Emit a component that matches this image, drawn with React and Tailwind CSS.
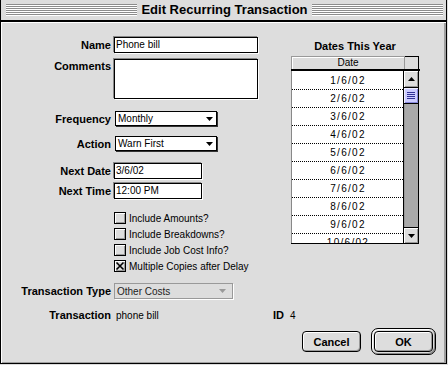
import React from "react";

const Arrow = ({ color = "#000" }) => (
  <svg width="7" height="4" viewBox="0 0 7 4" className="block">
    <path d="M0 0H7L3.5 4Z" fill={color} />
  </svg>
);

const UpArrow = () => (
  <svg width="7" height="4" viewBox="0 0 7 4" className="block">
    <path d="M3.5 0L7 4H0Z" fill="#000" />
  </svg>
);

const Checkbox = ({ checked }) => (
  <div className="w-[12px] h-[12px] border border-black bg-[#dddddd] shadow-[inset_1px_1px_0_#ffffff,inset_-1px_-1px_0_#999999] flex items-center justify-center">
    {checked && (
      <svg width="10" height="10" viewBox="0 0 10 10" className="block">
        <path d="M1.5 1.5L8.5 8.5M8.5 1.5L1.5 8.5" stroke="#000" strokeWidth="1.6" />
      </svg>
    )}
  </div>
);

const Label = ({ children, className = "" }) => (
  <div className={"w-[110px] text-right text-[11px] font-bold leading-[14px] text-black " + className}>
    {children}
  </div>
);

const Field = ({ value, w, h = "h-[16px]" }) => (
  <div
    className={
      "ml-[3px] bg-white border border-black shadow-[-1px_-1px_0_#888888,1px_1px_0_#ffffff] pl-[1px] text-[10px] leading-[14px] text-black flex items-center " +
      w +
      " " +
      h
    }
  >
    {value}
  </div>
);

const Popup = ({ value }) => (
  <div className="ml-[4px] w-[102px] h-[15px] bg-white border border-black shadow-[1px_1px_0_#333333] flex items-center justify-between pl-[2px] pr-[3px] text-[10px] leading-[13px] text-black">
    <span>{value}</span>
    <Arrow />
  </div>
);

const dates = ["1/6/02", "2/6/02", "3/6/02", "4/6/02", "5/6/02", "6/6/02", "7/6/02", "8/6/02", "9/6/02", "10/6/02"];

export default function App() {
  return (
    <div className="w-[448px] h-[365px] bg-[#dddddd] overflow-hidden font-['Liberation_Sans',Arial,sans-serif] text-black">
      <div className="w-[447px] h-[364px] border-l border-r border-b border-black flex flex-col">
        {/* Title bar */}
        <div className="h-[20px] shrink-0 flex items-center pl-[5px] pr-[3px] gap-[4px] border-b-2 border-black box-content">
          <div className="flex-1 h-[12px] bg-[image:repeating-linear-gradient(to_bottom,#8c8c8c_0px,#8c8c8c_1px,#ffffff_1px,#ffffff_2px)]" />
          <div className="text-[13px] font-bold leading-[16px] whitespace-nowrap">Edit Recurring Transaction</div>
          <div className="flex-1 h-[12px] bg-[image:repeating-linear-gradient(to_bottom,#8c8c8c_0px,#8c8c8c_1px,#ffffff_1px,#ffffff_2px)]" />
        </div>

        {/* Content */}
        <div className="h-[341px] shrink-0 flex flex-col shadow-[inset_1px_1px_0_#ffffff,inset_-2px_-1px_0_#a0a0a0]">
          <div className="flex items-start">
            {/* Left column */}
            <div className="w-[280px] pt-[15px] flex flex-col">
              <div className="flex items-center">
                <Label>Name</Label>
                <Field value="Phone bill" w="w-[144px]" />
              </div>
              <div className="flex items-start mt-[6px]">
                <Label>Comments</Label>
                <Field value="" w="w-[144px]" h="h-[40px]" />
              </div>
              <div className="flex items-center mt-[12px]">
                <Label>Frequency</Label>
                <Popup value="Monthly" />
              </div>
              <div className="flex items-center mt-[10px]">
                <Label>Action</Label>
                <Popup value="Warn First" />
              </div>
              <div className="flex items-center mt-[12px]">
                <Label>Next Date</Label>
                <Field value="3/6/02" w="w-[88px]" />
              </div>
              <div className="flex items-center mt-[4px]">
                <Label>Next Time</Label>
                <Field value="12:00 PM" w="w-[88px]" />
              </div>
              <div className="mt-[11px] pl-[113px] flex flex-col">
                {[
                  ["Include Amounts?", false],
                  ["Include Breakdowns?", false],
                  ["Include Job Cost Info?", false],
                  ["Multiple Copies after Delay", true],
                ].map(([t, c]) => (
                  <div key={t} className="h-[16px] flex items-center">
                    <Checkbox checked={c} />
                    <span className="ml-[3px] text-[10px] leading-[13px] whitespace-nowrap">{t}</span>
                  </div>
                ))}
              </div>
            </div>

            {/* Right column */}
            <div className="pl-[10px] pt-[17px] flex flex-col">
              <div className="w-[128px] text-center text-[11px] font-bold leading-[14px]">Dates This Year</div>
              <div className="mt-[3px] w-[128px] border-r border-b border-black">
                <div className="flex h-[13px]">
                  <div className="w-[114px] h-[13px] border-l border-t border-r border-[#999999] bg-[#dddddd] shadow-[inset_1px_1px_0_#ffffff] flex items-center justify-center text-[10px] leading-[12px]">
                    Date
                  </div>
                  <div className="flex-1 border-t border-black bg-[#dddddd]" />
                </div>
                <div className="h-[2px] w-[129px] bg-black" />
                <div className="flex h-[172px]">
                  <div className="w-[112px] border-l border-[#888888] bg-white overflow-hidden pt-[1px]">
                    {dates.map((d) => (
                      <div
                        key={d}
                        className="h-[18px] border-b border-dotted border-black flex items-center justify-center pl-[1px] text-[10px] leading-[12px] tracking-[1.3px]"
                      >
                        {d}
                      </div>
                    ))}
                  </div>
                  <div className="w-[15px] border-l border-black flex flex-col bg-[#aaaaaa]">
                    <div className="h-[17px] bg-[#dddddd] shadow-[inset_1px_1px_0_#ffffff,inset_-1px_-1px_0_#999999] border-b border-black flex items-center justify-center">
                      <UpArrow />
                    </div>
                    <div className="h-[16px] bg-[#ccccff] border-b border-black shadow-[inset_1px_1px_0_#eeeeff,inset_-1px_-1px_0_#8888dd] flex flex-col items-center justify-center gap-[1px]">
                      <div className="w-[8px] h-[1px] bg-[#333399]" />
                      <div className="w-[8px] h-[1px] bg-[#333399]" />
                      <div className="w-[8px] h-[1px] bg-[#333399]" />
                      <div className="w-[8px] h-[1px] bg-[#333399]" />
                    </div>
                    <div className="flex-1 shadow-[inset_1px_0_0_#999999]" />
                    <div className="h-[16px] bg-[#dddddd] border-t border-black shadow-[inset_1px_1px_0_#ffffff,inset_-1px_-1px_0_#999999] flex items-center justify-center">
                      <Arrow />
                    </div>
                  </div>
                </div>
              </div>
            </div>
          </div>

          {/* Transaction Type */}
          <div className="flex items-center mt-[9px]">
            <Label>Transaction Type</Label>
            <div className="ml-[3px] w-[119px] h-[16px] bg-[#dddddd] border border-[#999999] shadow-[1px_1px_0_#ffffff] flex items-center justify-between pl-[2px] pr-[6px] text-[10px] leading-[13px] text-[#222222]">
              <span>Other Costs</span>
              <Arrow color="#999999" />
            </div>
          </div>

          {/* Transaction */}
          <div className="flex items-center mt-[8px] h-[16px]">
            <Label>Transaction</Label>
            <span className="ml-[5px] w-[157px] text-[10px] leading-[13px]">phone bill</span>
            <span className="text-[11px] font-bold leading-[14px]">ID</span>
            <span className="ml-[6px] text-[10px] leading-[13px]">4</span>
          </div>

          {/* Buttons */}
          <div className="flex items-center justify-end gap-[10px] pr-[10px] mt-[5px]">
            <div className="w-[59px] h-[21px] border border-black rounded-[4px] bg-[#dddddd] shadow-[inset_1px_1px_0_#ffffff,inset_-1px_-1px_0_#999999] flex items-center justify-center text-[11px] font-bold leading-[14px]">
              Cancel
            </div>
            <div className="w-[65px] h-[27px] border border-black rounded-[7px] p-[2px] bg-[#dddddd] shadow-[inset_1px_1px_0_#ffffff,inset_-1px_-1px_0_#888888]">
              <div className="w-[59px] h-[21px] border border-black rounded-[4px] bg-[#dddddd] shadow-[inset_1px_1px_0_#ffffff,inset_-1px_-1px_0_#999999] flex items-center justify-center text-[11px] font-bold leading-[14px]">
                OK
              </div>
            </div>
          </div>
        </div>
      </div>
    </div>
  );
}
